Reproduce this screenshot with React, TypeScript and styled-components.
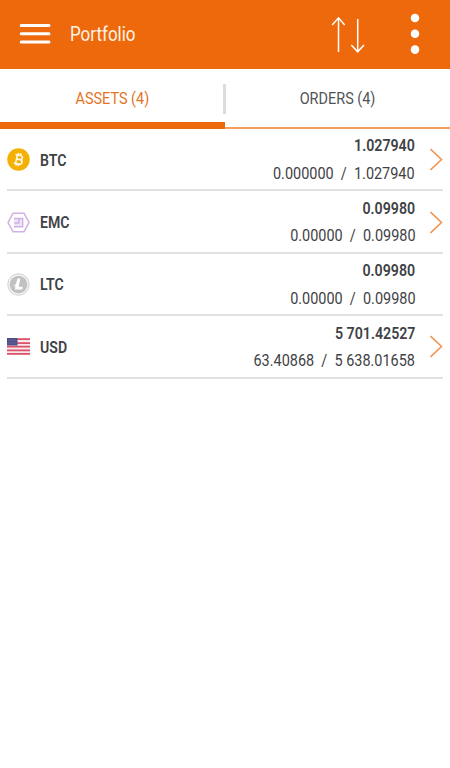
import React from 'react'
import styled, {createGlobalStyle} from 'styled-components'

const GlobalStyle = createGlobalStyle`
  * {
    box-sizing: border-box;
  }

  body {
    margin: 0;
    background: #fff;
    color: #3f4245;
    font-family: Roboto, 'Liberation Sans', sans-serif;
    font-size: 17px;
  }
`

const Screen = styled.div`
  display: flex;
  flex-direction: column;
  min-height: 768px;
  background: #fff;
`

// Condensed lettering, squeezed towards the side the text is aligned to
const Text = styled.span<{$origin?: string; $scale?: number}>`
  display: block;
  white-space: pre;
  transform: scaleX(${({$scale}) => $scale ?? 0.85});
  transform-origin: ${({$origin}) => $origin ?? 'left'} center;
`

const Header = styled.header`
  display: flex;
  align-items: center;
  height: 69px;
  padding: 0 30px 1px 19px;
  background: #ed690c;
  color: #fff4e8;
`

const Title = styled(Text)`
  flex: 1;
  margin: 1px 0 0 19px;
  font-size: 19.5px;
  line-height: 24px;
`

const IconButton = styled.button`
  display: flex;
  padding: 0;
  border: 0;
  background: none;
  color: #fff;
`

const SortButton = styled(IconButton)`
  margin-right: 45px;
`

const Tabs = styled.nav`
  display: flex;
  height: 60px;
`

const Tab = styled.div<{$active?: boolean}>`
  display: flex;
  flex: 1;
  align-items: center;
  justify-content: center;
  padding-top: ${({$active}) => ($active ? 5 : 0)}px;
  border-bottom: ${({$active}) => ($active ? '7px solid #ed690c' : '2px solid #f5a05f')};
  color: ${({$active}) => ($active ? '#e5721f' : '#505356')};
`

const TabDivider = styled.div`
  width: 3px;
  height: 30px;
  margin: 15px -1px 0 -2px;
  background: #dcdddf;
`

const List = styled.main`
  padding: 0 7px;
`

const Row = styled.div`
  display: flex;
  align-items: center;
  height: 62.4px;
  padding-top: 1px;
  border-bottom: 2px solid #dfe0e4;
`

const Symbol = styled(Text)`
  flex: 1;
  margin-left: 10px;
  font-weight: 600;
`

const Amounts = styled.div`
  display: flex;
  flex-direction: column;
  gap: 2.5px;
  align-items: flex-end;
  line-height: 25px;
`

const Total = styled(Text)`
  font-weight: 600;
`

const ChevronSlot = styled.div`
  display: flex;
  justify-content: flex-end;
  width: 28px;
`

const MenuIcon = () => (
  <svg width='32' height='22' viewBox='0 0 32 22'>
    <path d='M2.2 2.5H30M2.2 10.8H30M2.2 19H30' stroke='#fff' strokeWidth='3' strokeLinecap='round' />
  </svg>
)

const SortIcon = () => (
  <svg width='34' height='37' viewBox='0 0 34 37' fill='none' stroke='#fff' strokeWidth='1.5'>
    <path d='M7.5 36V2M1.2 9L7.5 1.8L13.7 9M26.7 3V36M20.3 29L26.7 35.8L33 29' />
  </svg>
)

const MoreIcon = () => (
  <svg width='10' height='42' viewBox='0 0 10 42' fill='#fff'>
    <circle cx='5' cy='5' r='4.3' />
    <circle cx='5' cy='20.8' r='4.3' />
    <circle cx='5' cy='36.6' r='4.3' />
  </svg>
)

const Chevron = () => (
  <svg width='13' height='23' viewBox='0 0 13 23' fill='none'>
    <path d='M0.5 1L11.5 11.5L0.5 22' stroke='#f09552' strokeWidth='1.6' />
  </svg>
)

const BtcIcon = () => (
  <svg width='23' height='23' viewBox='0 0 23 23'>
    <circle cx='11.5' cy='11.5' r='11.2' fill='#f5b006' />
    <g transform='rotate(12 11.5 11.5)' fill='none' stroke='#fff8e5' strokeWidth='1.7'>
      <path d='M7.5 7.2H12.5Q15 7.2 15 9.2T12.5 11.3H9.4M12.5 11.3Q15.5 11.3 15.5 13.6T12.8 15.9H7.5M9.5 7.2V15.9M10.2 5V7.2M12.6 5V7.2M10.2 15.9V18M12.6 15.9V18' />
    </g>
  </svg>
)

const EmcIcon = () => (
  <svg width='23' height='23' viewBox='0 0 23 23' fill='none'>
    <path d='M6 2.3H17L22 11.5L17 20.7H6L1 11.5Z' stroke='#d2afe4' strokeWidth='1.5' />
    <path d='M7 7.5H16V16H7Z' fill='#f0e2f8' />
    <path d='M7 7.5H15.7V15.7H7M12 8V12H7.3' stroke='#ceb0e2' strokeWidth='1.4' />
  </svg>
)

const LtcIcon = () => (
  <svg width='23' height='23' viewBox='0 0 23 23'>
    <circle cx='11.5' cy='11.5' r='10.7' fill='#f5f5f5' stroke='#cecece' />
    <circle cx='11.5' cy='11.5' r='8.8' fill='#c1c1c1' />
    <path d='M10.5 5.5H13.3L11.7 13.8H15.7L15.2 16.5H7.8L8.5 13.1L7.3 13.5L7.7 11.8L8.9 11.3Z' fill='#fff' />
  </svg>
)

const UsdIcon = () => (
  <svg width='23' height='17' viewBox='0 0 23 17'>
    <path d='M0 0H23V17H0Z' fill='#f8e7eb' />
    <path d='M0 1.2H23M0 5.1H23M0 8.7H23M0 12.3H23M0 15.8H23' stroke='#dc5267' strokeWidth='1.7' />
    <path d='M0 0H10.5V7.5H0Z' fill='#505087' />
    <path d='M1.5 2.2H9.5M1.5 5H9.5' stroke='#8585ad' strokeWidth='.7' strokeDasharray='1 1' />
  </svg>
)

type Asset = {
  symbol: string
  icon: React.ReactNode
  total: string
  split: string
  hasDetails: boolean
}

const assets: Asset[] = [
  {symbol: 'BTC', icon: <BtcIcon />, total: '1.027940', split: '0.000000  /  1.027940', hasDetails: true},
  {symbol: 'EMC', icon: <EmcIcon />, total: '0.09980', split: '0.00000  /  0.09980', hasDetails: true},
  {symbol: 'LTC', icon: <LtcIcon />, total: '0.09980', split: '0.00000  /  0.09980', hasDetails: false},
  {symbol: 'USD', icon: <UsdIcon />, total: '5 701.42527', split: '63.40868  /  5 638.01658', hasDetails: true}
]

const AssetRow = ({asset}: {asset: Asset}) => {
  const {symbol, icon, total, split, hasDetails} = asset

  return (
    <Row>
      {icon}
      <Symbol $scale={0.83}>{symbol}</Symbol>
      <Amounts>
        <Total $origin='right' $scale={0.835}>{total}</Total>
        <Text $origin='right'>{split}</Text>
      </Amounts>
      <ChevronSlot>{hasDetails && <Chevron />}</ChevronSlot>
    </Row>
  )
}

const App = () => (
  <Screen>
    <GlobalStyle />
    <Header>
      <IconButton aria-label='Menu'><MenuIcon /></IconButton>
      <Title $scale={0.87}>Portfolio</Title>
      <SortButton aria-label='Sort'><SortIcon /></SortButton>
      <IconButton aria-label='More'><MoreIcon /></IconButton>
    </Header>
    <Tabs>
      <Tab $active>
        <Text $origin='center'>ASSETS (4)</Text>
      </Tab>
      <TabDivider />
      <Tab>
        <Text $origin='center'>ORDERS (4)</Text>
      </Tab>
    </Tabs>
    <List>
      {assets.map((asset) => (
        <AssetRow key={asset.symbol} asset={asset} />
      ))}
    </List>
  </Screen>
)

export default App
